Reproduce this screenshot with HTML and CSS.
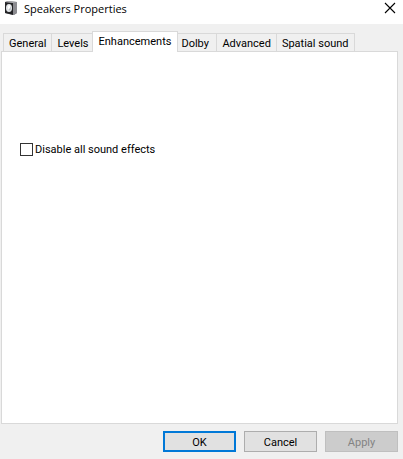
FILE: index.html
```html
<!DOCTYPE html>
<html lang="en">
<head>
  <meta charset="UTF-8">
  <meta name="viewport" content="width=device-width, initial-scale=1.0">
  <title>Speakers Properties</title>
  <link rel="stylesheet" href="styles.css">
</head>
<body>
  <header class="title-bar">
    <svg class="speaker-icon" width="16" height="16" viewBox="0 0 16 16" aria-hidden="true">
      <path d="M2 2l3-1 9 1v11l-3 2-9-2z" fill="#77777b"/>
      <path d="M2 2l8 1v12l-8-2z" fill="#242427"/>
      <path d="M10 3l4-1v11l-4 2z" fill="#8b8b90"/>
      <path d="M2 2l3-1 9 1-4 1z" fill="#a9a9ad"/>
      <ellipse cx="6" cy="8" rx="3" ry="4" fill="#e4e7ea"/>
      <ellipse cx="6.5" cy="8.5" rx="1.5" ry="2" fill="#b9c0c5"/>
      <path d="M5 6l2-1v3l-2 2z" fill="#fff"/>
    </svg>
    <h1 class="title">Speakers Properties</h1>
    <button type="button" class="close-button" aria-label="Close">
      <svg width="12" height="12" viewBox="0 0 12 12" aria-hidden="true">
        <path d="M1 1l10 10M11 1L1 11" stroke="#000" stroke-width="1.1" fill="none"/>
      </svg>
    </button>
  </header>

  <main class="dialog">
    <div class="tabs" role="tablist">
      <button type="button" class="tab" role="tab">General</button>
      <button type="button" class="tab" role="tab">Levels</button>
      <button type="button" class="tab active" role="tab" aria-selected="true">Enhancements</button>
      <button type="button" class="tab" role="tab">Dolby</button>
      <button type="button" class="tab" role="tab">Advanced</button>
      <button type="button" class="tab" role="tab">Spatial sound</button>
    </div>

    <section class="panel" role="tabpanel">
      <label class="option" for="disable-effects">
        <input type="checkbox" id="disable-effects" class="checkbox">
        Disable all sound effects
      </label>
    </section>

    <footer class="actions">
      <button type="button" class="action default">OK</button>
      <button type="button" class="action">Cancel</button>
      <button type="button" class="action" disabled>Apply</button>
    </footer>
  </main>
</body>
</html>
```
FILE: styles.css
```css
* {
  box-sizing: border-box;
}

body {
  display: flex;
  flex-direction: column;
  min-height: 100vh;
  margin: 0;
  background-color: #f0f0f0;
  color: #000;
  font-family: Roboto, sans-serif;
  font-size: 11px;
}

button {
  margin: 0;
  font: inherit;
  color: inherit;
}

.title-bar {
  display: flex;
  align-items: flex-start;
  height: 24px;
  padding-left: 3px;
  background-color: #fff;
}

.title {
  flex: 1;
  margin: 0 0 0 5px;
  font-family: "Open Sans", "Noto Sans", sans-serif;
  font-size: 11px;
  font-weight: 400;
  line-height: 18px;
}

.close-button {
  display: flex;
  padding: 2px 7px;
  border: none;
  background: none;
}

.dialog {
  flex: 1;
  display: flex;
  flex-direction: column;
  padding: 7px 5px 7px 1px;
}

.tabs {
  display: flex;
  align-items: flex-end;
  padding-left: 2px;
}

.tab {
  min-width: 41px;
  height: 18px;
  padding: 0 5px;
  border: 1px solid #d9d9d9;
  border-bottom: none;
  background-color: #f0f0f0;
  line-height: 19px;
  text-align: left;
  white-space: nowrap;
}

.tab + .tab {
  border-left: none;
}

.tab.active {
  position: relative;
  height: 21px;
  margin: 0 -2px -1px -3px;
  padding: 0 6px 2px;
  border-left: 1px solid #d9d9d9;
  background-color: #fff;
}

.panel {
  flex: 1;
  padding: 90px 18px;
  border: 1px solid #d9d9d9;
  background-color: #fff;
}

.option {
  display: inline-flex;
  align-items: center;
  gap: 2px;
  line-height: 15px;
}

.checkbox {
  appearance: none;
  width: 13px;
  height: 13px;
  margin: 0;
  border: 1px solid #333;
  background-color: #fff;
}

.checkbox:checked {
  background-color: #0078d7;
}

.actions {
  display: flex;
  justify-content: flex-end;
  gap: 8px;
  padding-top: 7px;
}

.action {
  width: 73px;
  height: 21px;
  padding: 1px 0 0;
  border: 1px solid #adadad;
  background-color: #e1e1e1;
}

.action.default {
  border: 2px solid #0078d7;
}

.action:disabled {
  border-color: #bfbfbf;
  background-color: #ccc;
  color: #838383;
}
```
